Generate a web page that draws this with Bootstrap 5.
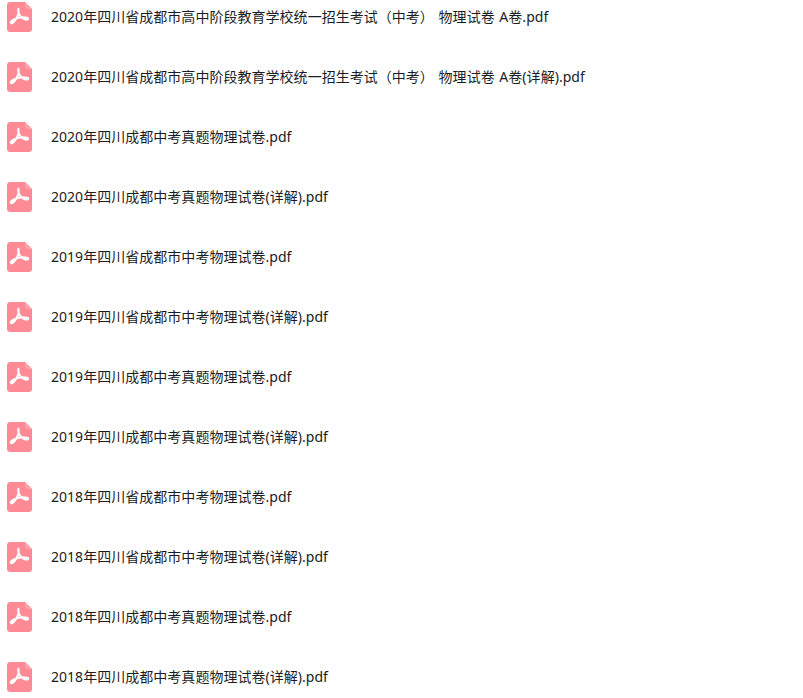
<!doctype html>
<html lang="zh"><head><meta charset="utf-8">
<link href="https://cdn.jsdelivr.net/npm/bootstrap@5.3.0/dist/css/bootstrap.min.css" rel="stylesheet">
<style>
html,body{height:698px;overflow:hidden;background:#fff}
.file-list{margin-top:-13px;padding-left:7px}
.file-row{height:60px;gap:19px}
.file-ico{width:25px;height:30px;flex:none;display:block}
.file-name{font:14px/20px "Noto Sans","Noto Sans CJK SC",sans-serif;color:#1a1d24;white-space:pre;word-spacing:1px;letter-spacing:.03px}
</style></head><body>
<svg width="0" height="0" class="d-block"><defs><symbol id="pdf" viewBox="0 0 25 30">
<path d="M3.5 0H18L25 7V26.5a3.5 3.5 0 0 1-3.5 3.5H3.5A3.5 3.5 0 0 1 0 26.5V3.5A3.5 3.5 0 0 1 3.5 0Z" fill="#fd8a94"/>
<path d="M18 0 25 7H20a2 2 0 0 1-2-2Z" fill="#fea3ab"/>
<path d="M11.4 6.8c-1 2.4 1.2 6.6 3.4 8.8 1.7 1.5 4.4 2.4 6.2 1.7M11.4 6.8c1 2.5-.4 7.6-2.8 10.8-1.3 1.9-3.5 4-4.6 3.4-1.1-.6 1.1-2.8 3.5-3.9 3.3-1.5 8.8-2.6 13.6-1.1" fill="none" stroke="#fff" stroke-width="2" stroke-linecap="round" stroke-linejoin="round"/>
</symbol></defs></svg>
<div class="file-list d-flex flex-column">
<div class="file-row d-flex align-items-center"><svg class="file-ico"><use href="#pdf"/></svg><span class="file-name">2020年四川省成都市高中阶段教育学校统一招生考试（中考） 物理试卷 A卷.pdf</span></div>
<div class="file-row d-flex align-items-center"><svg class="file-ico"><use href="#pdf"/></svg><span class="file-name">2020年四川省成都市高中阶段教育学校统一招生考试（中考） 物理试卷 A卷(详解).pdf</span></div>
<div class="file-row d-flex align-items-center"><svg class="file-ico"><use href="#pdf"/></svg><span class="file-name">2020年四川成都中考真题物理试卷.pdf</span></div>
<div class="file-row d-flex align-items-center"><svg class="file-ico"><use href="#pdf"/></svg><span class="file-name">2020年四川成都中考真题物理试卷(详解).pdf</span></div>
<div class="file-row d-flex align-items-center"><svg class="file-ico"><use href="#pdf"/></svg><span class="file-name">2019年四川省成都市中考物理试卷.pdf</span></div>
<div class="file-row d-flex align-items-center"><svg class="file-ico"><use href="#pdf"/></svg><span class="file-name">2019年四川省成都市中考物理试卷(详解).pdf</span></div>
<div class="file-row d-flex align-items-center"><svg class="file-ico"><use href="#pdf"/></svg><span class="file-name">2019年四川成都中考真题物理试卷.pdf</span></div>
<div class="file-row d-flex align-items-center"><svg class="file-ico"><use href="#pdf"/></svg><span class="file-name">2019年四川成都中考真题物理试卷(详解).pdf</span></div>
<div class="file-row d-flex align-items-center"><svg class="file-ico"><use href="#pdf"/></svg><span class="file-name">2018年四川省成都市中考物理试卷.pdf</span></div>
<div class="file-row d-flex align-items-center"><svg class="file-ico"><use href="#pdf"/></svg><span class="file-name">2018年四川省成都市中考物理试卷(详解).pdf</span></div>
<div class="file-row d-flex align-items-center"><svg class="file-ico"><use href="#pdf"/></svg><span class="file-name">2018年四川成都中考真题物理试卷.pdf</span></div>
<div class="file-row d-flex align-items-center"><svg class="file-ico"><use href="#pdf"/></svg><span class="file-name">2018年四川成都中考真题物理试卷(详解).pdf</span></div>
</div>
</body></html>
